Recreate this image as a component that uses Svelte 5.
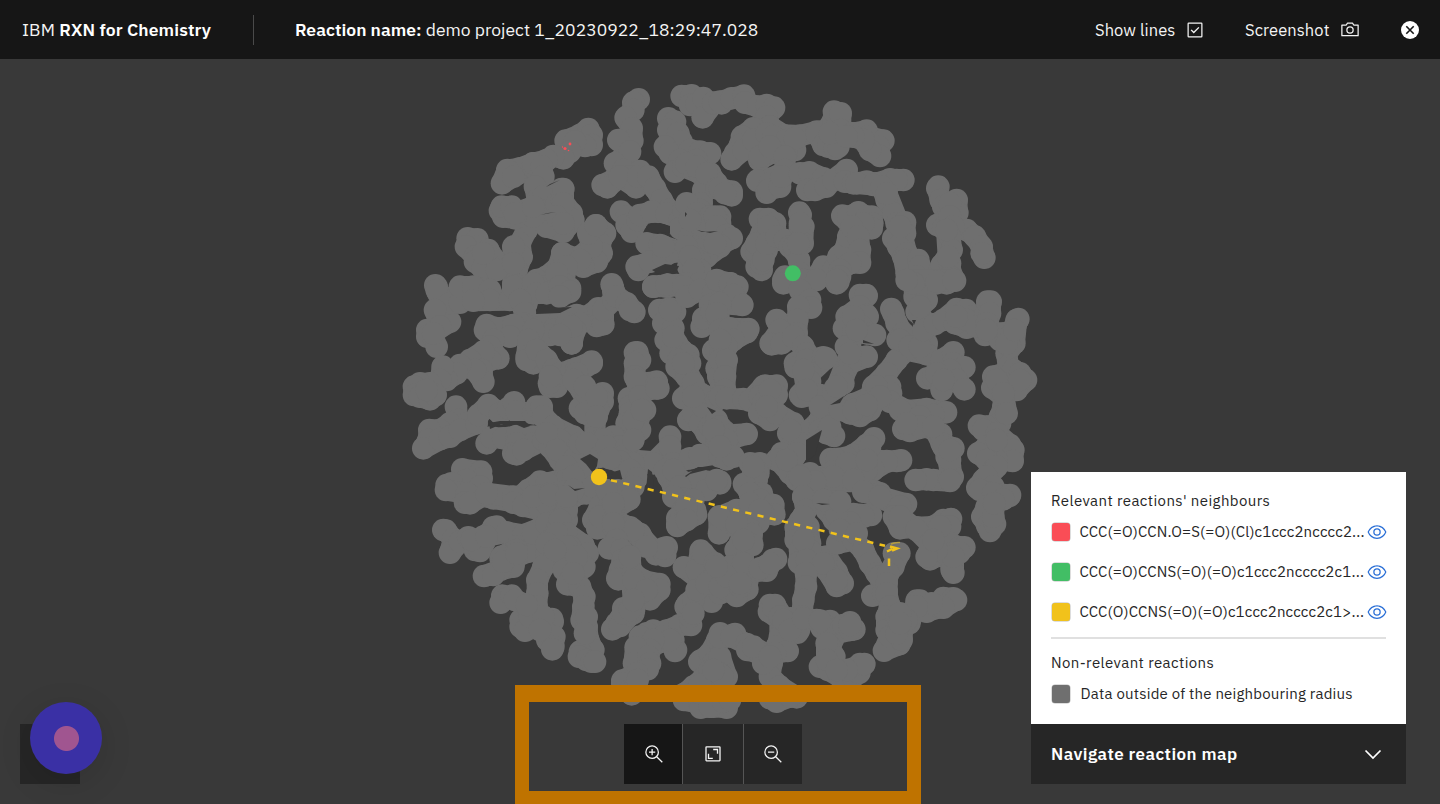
<script>
  // Clusters are kept per tile, in thirds of a pixel from the tile's corner.
  const tiles = [
    {
      x: 400, y: 70,
      strands: [
        '497,212 540,195 565,177 575,195 575,225 555,228 525,215 510,245 490,265 460,258 440,270 400,280 360,295 322,300 306,340 340,320 400,290',
        '400,280 425,290 430,320 405,350 412,390 395,430 380,480 360,520 365,560 350,600 340,640 345,660',
        '485,357 465,375 430,380 420,420 470,400 485,390 515,430 520,450 490,485 440,470 400,440 345,445 310,440 300,422 305,410 335,410 345,430 400,410',
        '490,357 490,400 470,440 490,460',
        '203,505 232,508 235,530 265,540 285,570 310,590 330,590',
        '198,530 225,560 225,575 248,595 290,600 250,550',
        '340,530 340,580',
        '588,466 615,490 600,520 605,550 590,575 550,590 540,560 575,530 565,490 588,466',
        '487,550 475,590 440,620 410,630 405,650',
        '487,550 540,570 500,590 490,640 510,655 440,650 470,610',
        '635,643 640,660',
        '716,88 700,98 700,120 677,143 695,175 697,212 655,210 690,245 645,280 670,300 720,303 690,320 640,330 608,345 622,352 660,320 708,352 715,320 745,320 765,355 785,390 805,420',
        '805,145 825,155 805,180 835,190 845,215 795,230 810,250 870,240 900,245 930,250 890,270 840,270 825,305 850,290 900,310 930,330 910,360 905,400 900,420',
        '930,310 950,340', '860,280 890,290 920,310',
        '845,78 875,76 870,105 890,100 910,84 908,142 940,100 965,100',
        '663,425 680,440 680,465 695,485 712,450 720,435 755,425 800,430 840,450 850,420 860,400 890,430 930,440 960,440',
        '840,475 870,500 910,510 960,510 960,460 900,465 870,450',
        '740,520 780,525 840,545 900,540 960,530 920,560 900,575 870,560',
        '715,600 710,590 750,575 790,560 820,545 790,530',
        '860,530 880,560 865,590 900,600',
        '870,560 880,600 860,640 830,645 760,650 800,650 900,640 920,660'
      ]
    },
    {
      x: 720, y: 70,
      strands: [
        '-20,98 0,95 35,85 72,77 75,98 115,110 140,105 162,113 140,140 150,170 190,195 240,197 290,185 320,180 340,150 342,125 362,130 362,180 400,190 440,182 445,200 490,212 475,230 480,258 450,240 430,210 400,200',
        '290,190 310,225 325,230 345,237 355,230 330,190 380,200',
        '150,170 100,175 66,200 60,225 45,250 35,268 70,240 100,210 140,190',
        '160,200 200,210 225,240 200,245 150,250 118,270 120,260 150,230 225,205',
        '195,260 195,300 170,320 112,332 150,340 140,368 145,360 180,350 185,320',
        '240,310 268,307 310,325 262,360 285,360 318,350 340,330 380,300 375,335 400,340 440,335 470,340 510,328 550,330 530,330',
        '410,340 460,345 485,350 500,390 520,430 530,460 555,457 555,490 520,505 535,530 550,560 560,610 590,640 600,655',
        '500,370 540,470 560,550',
        '555,570 595,570 600,590 590,620 680,640 705,632 690,600 660,600',
        '655,350 652,355 662,390 670,410 710,390 712,428 680,445 652,465 670,475 700,470 740,480 765,500 785,530 793,563 785,550',
        '690,400 690,440',
        '700,470 690,500 695,540 665,585 690,580 690,620 650,640',
        '680,480 685,560',
        '-10,355 0,355 35,365 35,376 15,370',
        '-15,440 -10,470 20,495 35,505 0,525 -15,520',
        '120,447 145,447 165,460 170,510 150,490 125,490 95,545 110,550 110,590 125,600 125,580 140,540',
        '110,520 130,570', '145,470 140,520',
        '170,500 195,510 210,530 225,545',
        '238,428 242,435 240,470 250,470 248,520 222,530 237,570 240,610 235,640 195,620 190,630 250,640 290,620 310,590 340,600 355,560 375,540 385,500 395,470 367,437 385,440 415,427 440,440 455,440 457,460 455,475 430,460',
        '240,460 235,520',
        '395,470 415,500 420,540 420,578 390,580 360,600 350,640 360,620',
        '30,640 40,650 10,645',
        '425,677 440,677'
      ]
    },
    {
      x: 400, y: 280,
      strands: [
        '106,16 115,40 145,60 125,100 150,125 110,150 82,150 82,170 100,170 110,200',
        '110,20 110,30 150,70 180,68 180,20 220,20 270,30 270,60 220,62 330,60 340,20 360,60 380,70',
        '105,90 120,140 100,160',
        '400,10 410,40 440,40 480,20 510,35 480,50',
        '360,60 375,100 370,130 440,130 480,120 530,105 560,110 595,85 600,130 590,138 610,133 610,90 640,60 638,20 650,50 680,70 703,96 690,90',
        '360,130 400,160 460,150 540,130',
        '260,135 295,145 340,135 330,170 255,150 280,180 270,200 295,235 270,240 250,215 210,240 245,270 250,305 225,270 180,255 170,280 140,300 128,260 120,300 90,310 60,310 42,320 42,345 60,350 90,358 107,345 80,330',
        '515,190 525,150 500,130 450,165 400,150 385,180 380,230 400,250 380,240 410,210 440,240 460,270 450,320 470,320 447,310 480,280 515,270 530,265 575,245 575,250 530,280 530,310 560,360 608,340 608,365 595,390 540,385 560,400 585,420 585,470',
        '515,190 515,140 480,165', '450,290 520,300 560,340', '555,320 555,400 590,350 590,410',
        '168,380 175,420 200,430 150,430 120,450 88,450 85,480 70,505 120,478 150,470 180,450 230,430 235,405 265,375 300,400 325,385 342,367 350,395 400,400 410,380 425,380 430,410 460,440 520,470 560,500 600,510',
        '260,490 275,472 310,475 350,468 400,470 400,490 350,490 340,520 350,523 370,510 430,480 450,500 480,540 500,570 490,600 550,590 560,620',
        '460,440 480,480 530,500 560,560 540,600 590,640',
        '440,460 470,510 520,540 500,560 540,580 500,600', '540,490 600,480 620,510',
        '705,218 712,217 720,240 705,250 705,290 725,310 770,305 775,325 740,330 700,350 687,355 690,380 735,390 690,400 680,430 695,455 690,480 640,470 610,480 560,490 600,530 650,515 660,500 720,450',
        '710,300 720,350 700,420', '620,500 680,500 670,530', '725,390 700,480', '770,310 770,325',
        '778,90 810,85 825,95 790,130 820,145 797,180 830,190 850,215 865,225 812,220 835,240 870,250 830,260 860,290 880,320 850,355 880,350 910,350 925,380 865,420 880,400 900,430 920,460 950,490',
        '810,90 820,170 850,250 880,310 910,380 930,440 960,470', '900,340 950,360',
        '880,350 940,440 960,480',
        '760,20 800,13 850,20 860,50 900,30 940,40 960,60 930,75',
        '905,140 910,115 935,95 955,110',
        '940,212 950,212',
        '950,265 955,290 965,320',
        '810,470 810,500 760,550 700,550 660,545 630,535 820,550 870,535 960,520 900,525',
        '690,570 710,595 680,630 650,650',
        '805,590 820,620 795,570 860,610 900,600 960,610',
        '820,570 840,620 920,630', '660,645 700,620',
        '187,568 243,575 245,595 200,600 140,615 155,610 240,620 200,640 280,655 340,665 385,630 420,605 430,640 500,660',
        '400,650 440,630 520,650', '440,610 520,590 500,640'
      ]
    },
    {
      x: 720, y: 280,
      strands: [
        '-10,0 30,10 52,20 40,45 67,75 0,70 -10,100 0,150 30,145 85,147 80,157 40,180 20,200 0,180 0,240 20,240 15,290 15,330 0,350 20,355 70,357 90,362 130,320 135,317 170,317 170,345 120,350 130,370 118,400 150,420 170,400 220,430 205,460 220,490 223,530 185,520 170,540 200,560',
        '190,10 250,0 290,0',
        '355,5 350,0',
        '240,30 270,60 273,83 235,80 232,120 230,160 170,120 180,150 152,190 155,193 185,190 220,170 250,200 260,220 225,250 227,262 260,240 310,232 318,235 270,280 270,305 240,345 245,350 300,345 310,380 300,420 270,450 240,490',
        '250,270 260,330', '210,450 230,520', '150,330 140,380',
        '300,420 300,450 330,460 342,468 320,460', '300,380 330,440',
        '420,45 438,45 420,80 380,110 440,105 443,110 372,145 425,140 440,160 465,165 400,155 390,195 378,200 400,230 440,230 390,250 370,290 345,325 370,310 340,335',
        '400,110 410,150', '390,220 350,320',
        '514,87 520,100 530,130 550,160 533,180 580,180 620,190 620,223 560,210 530,240 500,280 460,320 450,350 400,372 365,390 390,400 420,408 450,390 480,340 510,320 513,340 510,365 560,392 620,387 678,397 640,405 580,420 550,447 570,453 620,440 663,463 665,490 700,505 680,530 690,560 698,590 690,603 640,600 620,598 587,600',
        '540,180 570,200 600,200', '470,320 480,350 430,390', '360,390 400,390 440,375',
        '540,390 600,410 600,440 560,430 640,440 670,500 690,540', '690,510 690,600',
        '582,10 584,50 620,60 590,95 620,130 610,150 645,132 670,120 710,87 738,90 755,110 740,143 705,130 740,120 800,140 797,100 802,65 812,65 810,100 795,165 830,160 850,160 870,170 890,120 883,190 860,220 865,260',
        '710,110 770,140 800,130', '840,180 870,200', '590,40 600,80', '800,150 860,190',
        '895,117 883,150',
        '580,10 650,5 700,0 560,0',
        '820,290 880,270 900,280 918,300 890,330 850,310 817,323 850,350 850,380 840,410 840,430 800,440 777,437 790,450 830,460 870,495 880,510 878,543 830,540 800,500 775,520 800,540 820,570 790,600 772,623 820,640 870,645',
        '830,300 900,300', '850,340 860,400', '830,480 830,560', '800,590 820,620 800,640',
        '622,295 640,290 665,240 700,217 700,250 733,262 700,290 665,323 665,330 690,270 710,300 733,328',
        '650,280 670,300',
        '462,475 440,495 400,525 380,533 332,537 350,540 400,560 450,540 500,543 530,543 543,541 500,545 460,570 400,590 340,575 300,595 340,605 410,605 450,630 500,660',
        '380,550 440,570', '280,590 340,590', '450,500 440,540', '400,600 480,640',
        '175,540 210,580 230,600 270,580 250,610 285,605 250,650', '200,540 240,590',
        '-10,420 0,440 30,465 80,462 20,480 0,530 20,538 40,530', '-20,450 0,500',
        '0,605 -10,600',
        '90,550 120,550 115,580 110,600 72,612 90,640 125,640', '100,560 90,640'
      ]
    },
    {
      x: 400, y: 490,
      strands: [
        '138,0 200,10 195,38 210,40 260,10 340,20 340,38 370,48 420,60 440,40 500,20 560,10 580,-10',
        '400,20 450,10 520,0', '450,15 500,50 500,90',
        '130,120 138,122 160,148 150,188 180,155 205,142 225,180 240,183 280,112 290,110 250,140 320,127 370,135 420,115 470,90 500,60 500,20',
        '215,150 260,140', '302,205 350,170 385,185 350,200 340,230 300,240 252,258 280,255',
        '305,200 350,180 400,130', '310,215 350,190',
        '440,100 470,120 450,150 440,190 430,230 412,270 412,310 410,350 380,370 362,390 362,410 375,422 440,400 456,387 458,395 440,430 442,450 463,440 460,470 457,478',
        '390,380 430,380 420,420',
        '307,317 307,330 302,338 335,317 345,330 380,345',
        '480,90 500,130 550,165 563,190 510,170 495,200 492,240 540,220 553,230 505,275 502,283 540,290 553,320 550,350 545,390 560,410 565,450 580,480 540,485 537,500 560,510 575,515 585,515',
        '470,130 500,170 530,200 520,250', '560,380 555,430', '440,160 465,180',
        '580,90 600,50 630,40 650,0 680,10 688,28 640,60 592,115 640,110 660,100 690,112 720,132 725,142 760,180 768,193 800,172 795,195 795,198 790,175',
        '600,80 640,90', '620,0 640,40', '700,120 740,170',
        '640,100 650,150 627,175 665,180 668,210 660,240 652,265 655,268 700,250 730,272 778,282 778,300 750,328 720,310 700,345 670,355 700,370 662,385 650,400 637,418 660,408 690,375 702,360',
        '700,270 740,300', '670,370 690,360', '690,200 700,330',
        '760,422 740,430 720,450 800,422 840,405 873,405 870,380 857,350 862,342 900,305 935,335 900,270 852,232 890,240 902,182 910,190 950,230 930,270 960,310',
        '720,440 740,490', '790,440 770,460 820,450', '880,330 880,370', '890,300 920,280', '710,540 740,480',
        '828,480 825,483 810,450 760,450 750,480 707,472 702,520 745,500 750,520 743,538 710,550 667,572 667,580 690,600 695,613 700,600 713,570',
        '820,20 880,30 850,60 832,85 832,103 832,108 888,73 885,60 860,50 860,90',
        '957,80 957,130',
        '902,512 898,515 930,490 952,450 960,430 940,520 910,565 880,590 852,612 852,630 900,640 902,653 940,650 980,653',
        '930,540 960,590 900,610', '960,500 980,560',
        '900,585 960,550'
      ]
    },
    {
      x: 720, y: 490,
      strands: [
        '90,10 120,30 160,45 163,73 130,70 115,98 85,90 50,60 0,80 50,110 95,132 97,165 60,160 47,180 60,220 50,260 30,230 82,272 82,298 50,318 0,290 60,290 100,245 140,242 158,210 168,207 115,240',
        '90,40 120,60', '50,100 70,150 70,220', '20,260 60,280', '120,235 150,220',
        '-15,220 -10,230',
        '250,20 258,60 240,92 227,112 227,150 265,110 270,160 240,180 237,218 260,240 280,200 320,200 350,245 368,280 350,288 320,240 270,180',
        '250,80 250,150 260,210', '310,220 350,270',
        '258,250 258,290 250,330 245,380 212,385 200,400 232,428 237,420 200,400 165,345 150,345 147,365 180,390 180,440 170,470 203,483 165,490 155,520 150,560 180,590 230,622',
        '160,350 180,380', '190,390 210,420',
        '290,390 305,413 330,393 320,410 360,412 390,402 403,418 350,430 330,470 343,500 300,530 325,540 360,560 400,560 418,548 420,522 433,522 380,540',
        '250,385 300,392', '320,460 320,510 350,540', '370,405 390,420',
        '390,397 390,405',
        '320,60 342,90 400,72 453,75 430,80 390,98 370,130 352,160 400,150 430,180 450,220 470,250 500,300 475,312 457,317',
        '350,70 360,120 410,130', '480,260 490,310',
        '522,190 538,190 520,230 505,250 500,280',
        '310,30 360,35',
        '500,310 510,350 500,380 500,420 540,440 538,463 492,482 510,440 545,450 550,400 568,400 580,370 590,332 600,332 620,365 660,352 670,324 700,325 708,330 670,353 635,340',
        '530,380 530,430', '590,350 560,390',
        '540,370 540,400',
        '430,5 480,20 558,42 540,50 522,80 540,115 590,112 640,110 670,90 693,87 690,110 660,140 690,160 720,172 733,172 718,188 680,190 630,208 640,180 690,210 695,240 700,248 700,200',
        '540,80 590,120 630,160', '660,110 650,180', '620,200 640,150',
        '780,0 820,10 868,18 850,28 800,50 787,80 802,108 810,123 825,102 820,80 823,40',
        '45,432 0,442 35,440 80,462 82,480 120,490 130,520', '100,470 150,500',
        '0,552 8,560 -20,540',
        '-30,650 10,635 30,630',
        '150,625 170,635 210,620'
      ]
    }
  ];

  // Small openings left between touching clusters, in page pixels.
  const gaps = [
    '546,187 552,184 560,180 550,184', '540,215 556,212 548,213', '685,212 687,214 685,217',
    '697,230 702,232 718,231 710,233', '489,423 500,421 525,421 530,426 524,428 515,424 502,424 490,429',
    '646,226 660,223 670,226 670,233 650,232', '652,270 665,264 679,266 677,270 660,275',
    '538,304 550,308 572,307 560,313 536,314', '580,459 590,454 598,459 597,466 593,473 586,464',
    '568,485 574,489 585,488 575,491', '613,472 620,470 622,478 610,480',
    '648,469 652,472 654,486 650,490 646,490', '685,476 698,467 718,467 690,474 686,477',
    '707,407 716,411 712,414', '912,320 916,320 914,325', '863,340 874,344 863,343',
    '830,405 844,396 840,403', '806,440 822,430 815,455 806,462', '816,503 830,504 822,505'
  ];

  const dots = tiles.map((t) => ({
    ...t,
    nodes: t.strands.flatMap((s) => s.split(' ').map((p) => p.split(',')))
  }));

  const neighbours = [
    { color: '#fa4d56', text: 'CCC(=O)CCN.O=S(=O)(Cl)c1ccc2ncccc2...' },
    { color: '#42be65', text: 'CCC(=O)CCNS(=O)(=O)c1ccc2ncccc2c1...' },
    { color: '#f1c21b', text: 'CCC(O)CCNS(=O)(=O)c1ccc2ncccc2c1>...' }
  ];
</script>

<div class="app">
  <header>
    <div class="brand">IBM <b>RXN for Chemistry</b></div>
    <div class="title"><b>Reaction name:</b> <span>demo project 1_20230922_18:29:47.028</span></div>
    <div class="actions">
      <button class="lines"><span>Show lines</span>
        <svg width="20" height="20" viewBox="0 0 32 32" fill="#f4f4f4"><path d="M26 4H6a2 2 0 0 0-2 2v20a2 2 0 0 0 2 2h20a2 2 0 0 0 2-2V6a2 2 0 0 0-2-2zM6 26V6h20v20zM14 21.5l-5-4.96L10.6 15l3.4 3.35L21.4 11 23 12.58z" /></svg>
      </button>
      <button class="shot"><span>Screenshot</span>
        <svg width="20" height="20" viewBox="0 0 32 32" fill="#f4f4f4"><path d="M29 26H3a1 1 0 0 1-1-1V8a1 1 0 0 1 1-1h6.46l1.71-2.55A1 1 0 0 1 12 4h8a1 1 0 0 1 .83.45L22.54 7H29a1 1 0 0 1 1 1v17a1 1 0 0 1-1 1zM4 24h24V9h-6a1 1 0 0 1-.83-.45L19.46 6h-6.92l-1.71 2.55A1 1 0 0 1 10 9H4z" /><path d="M16 22a6 6 0 1 1 6-6 6 6 0 0 1-6 6zm0-10a4 4 0 1 0 4 4 4 4 0 0 0-4-4z" /></svg>
      </button>
      <button class="close" aria-label="Close">
        <svg width="20" height="20" viewBox="0 0 20 20"><circle cx="10" cy="10" r="9" fill="#fff" /><path d="M6.3 6.3l7.4 7.4M13.7 6.3l-7.4 7.4" stroke="#161616" stroke-width="1.6" /></svg>
      </button>
    </div>
  </header>

  <main>
    <svg class="map" width="1440" height="745" viewBox="0 59 1440 745">
      {#each dots as t}
        <g transform="translate({t.x} {t.y}) scale(0.33333)" fill="#6f6f6f">
          {#each t.strands as s}
            <polyline points={s} fill="none" stroke="#6f6f6f" stroke-width="64" stroke-linejoin="round" stroke-linecap="round" />
          {/each}
          {#each t.nodes as n}
            <circle cx={n[0]} cy={n[1]} r="34" />
          {/each}
        </g>
      {/each}
      {#each gaps as g}
        <polygon points={g} fill="#393939" />
      {/each}
      <g fill="#fa4d56">
        <circle cx="565" cy="148.500" r="1.600" /><circle cx="570" cy="144" r="1.400" /><circle cx="568.500" cy="150.500" r=".8" /><circle cx="562.500" cy="147" r=".7" />
      </g>
      <circle cx="792.800" cy="273.300" r="8" fill="#42be65" />
      <g stroke="#f1c21b" stroke-width="2.500" fill="none">
        <path d="M611 480.200L885 545.800" stroke-dasharray="6.200 6.350" />
        <path d="M887 551.500l5-2.500M890 546.500l7 2-5 2M889 558.500v7.500" />
        <path d="M891 544q4-2 9-1.500" stroke-width="1.500" opacity=".55" />
      </g>
      <circle cx="599" cy="477" r="8.200" fill="#f1c21b" />
    </svg>

    <div class="highlight"></div>

    <div class="zoom">
      <button class="active" aria-label="Zoom in">
        <svg width="20" height="20" viewBox="0 0 32 32" fill="#f4f4f4"><path d="M18 12h-4V8h-2v4H8v2h4v4h2v-4h4z" /><path d="M21.45 20A10.700 10.700 0 0 0 24 13a11 11 0 1 0-11 11 10.700 10.700 0 0 0 7-2.550L28.590 30 30 28.590zM13 22a9 9 0 1 1 9-9 9 9 0 0 1-9 9z" /></svg>
      </button>
      <button aria-label="Fit to screen">
        <svg width="20" height="20" viewBox="0 0 20 20" fill="none" stroke="#f4f4f4" stroke-width="1.300"><rect x="3" y="2.800" width="14" height="14" rx=".5" /><path d="M10.200 5.500h4.300v4.300M5.500 9.800v4.500h4.300" /></svg>
      </button>
      <button aria-label="Zoom out">
        <svg width="20" height="20" viewBox="0 0 32 32" fill="#f4f4f4"><path d="M8 12h10v2H8z" /><path d="M21.450 20A10.700 10.700 0 0 0 24 13a11 11 0 1 0-11 11 10.700 10.700 0 0 0 7-2.550L28.590 30 30 28.590zM13 22a9 9 0 1 1 9-9 9 9 0 0 1-9 9z" /></svg>
      </button>
    </div>

    <div class="corner"></div>
    <div class="record"></div>

    <section class="legend">
      <div class="panel">
        <h2 class="rel">Relevant reactions' neighbours</h2>
        {#each neighbours as n}
          <div class="row">
            <i style="background:{n.color}"></i>
            <span>{n.text}</span>
            <svg width="20" height="20" viewBox="0 0 32 32" fill="#2a6fd6"><path d="M30.940 15.660A16.690 16.690 0 0 0 16 5 16.690 16.690 0 0 0 1.060 15.660a1 1 0 0 0 0 .68A16.690 16.690 0 0 0 16 27a16.690 16.690 0 0 0 14.940-10.660 1 1 0 0 0 0-.68zM16 25c-5.300 0-10.900-3.930-12.930-9C5.100 10.930 10.700 7 16 7s10.900 3.930 12.930 9C26.900 21.070 21.300 25 16 25z" /><path d="M16 10a6 6 0 1 0 6 6 6 6 0 0 0-6-6zm0 10a4 4 0 1 1 4-4 4 4 0 0 1-4 4z" /></svg>
          </div>
        {/each}
        <hr />
        <h2 class="non">Non-relevant reactions</h2>
        <div class="row other"><i></i><span>Data outside of the neighbouring radius</span></div>
      </div>
      <button class="nav"><span>Navigate reaction map</span>
        <svg width="20" height="20" viewBox="0 0 20 20"><path d="M2.500 6.500L10 14l7.500-7.500" fill="none" stroke="#fff" stroke-width="1.700" /></svg>
      </button>
    </section>
  </main>
</div>

<style>
  :global(body) { background: #393939; overflow: hidden; }
  .app {
    display: flex; flex-direction: column; width: 1440px; height: 804px; overflow: hidden;
    background: #393939; color: #f4f4f4; font-family: "IBM Plex Sans", Roboto, sans-serif; font-size: 16px;
  }
  button { background: none; border: 0; padding: 0; margin: 0; color: inherit; font: inherit; display: flex; align-items: center; }
  svg { display: block; flex: none; }
  b { font-weight: 600; color: #fff; }
  header { height: 59px; flex: none; box-sizing: border-box; background: #161616; display: flex; align-items: center; white-space: nowrap; padding: 1px 20px 0 22px; }
  .brand { width: 231px; height: 30px; line-height: 30px; border-right: 1px solid #4a4a4a; font-size: 17.500px; letter-spacing: .12px; }
  .title { margin-left: 41px; margin-top: -2px; font-size: 17.500px; letter-spacing: .01px; }
  .actions { margin-left: auto; display: flex; align-items: center; }
  .actions span { font-size: 16.500px; letter-spacing: .07px; }
  .lines { width: 110px; justify-content: space-between; margin-right: 40px; }
  .shot { width: 115px; justify-content: space-between; margin-right: 40px; }
  main { position: relative; flex: 1; overflow: hidden; }
  .highlight { position: absolute; left: 515px; top: 626px; width: 406px; height: 119px; box-sizing: border-box; border: solid #bf7300; border-width: 17px 14px 13px; }
  .zoom { position: absolute; left: 624px; top: 665px; display: flex; width: 178px; height: 60px; background: #262626; }
  .zoom button { width: 58px; justify-content: center; box-sizing: border-box; }
  .zoom button + button { border-left: 1px solid #555; width: 61px; }
  .zoom button:last-child { width: 59px; padding-right: 1px; }
  .zoom .active { background: #161616; padding-left: 1px; }
  .corner { position: absolute; left: 20px; top: 665px; width: 60px; height: 60px; background: #262626; }
  .record { position: absolute; left: 30px; top: 643px; width: 72px; height: 72px; border-radius: 50%; background: radial-gradient(circle at 36.500px 36.500px, #a05590 12px, #3a30a5 13px); box-shadow: 0 8px 34px rgba(0, 0, 0, .12); }
  .legend { position: absolute; left: 1031px; top: 413px; width: 375px; }
  .panel { height: 252px; box-sizing: border-box; background: #fff; color: #262626; padding: 19px 20px 0; white-space: nowrap; }
  h2 { margin: 0; font-size: 15px; font-weight: 400; line-height: 20px; letter-spacing: .4px; }
  .row { height: 40px; display: flex; align-items: center; }
  .rel + .row { margin-top: 1px; }
  .row i { width: 18px; height: 18px; border-radius: 3px; margin: 0 10px 0 .5px; flex: none; box-shadow: 0 0 0 .5px #bbb; }
  .row span { font-size: 15px; flex: 1; letter-spacing: .17px; padding-bottom: 2px; }
  .row svg { margin-right: -1px; }
  hr { border: 0; height: 2px; background: #e0e0e0; margin: 5px 0 14px; }
  .other { height: 42px; }
  .other i { background: #6f6f6f; margin-right: 11px; }
  .row.other span { letter-spacing: .2px; }
  .nav { width: 375px; height: 60px; background: #262626; padding: 0 23px 0 20px; justify-content: space-between; font-size: 17px; font-weight: 600; letter-spacing: .44px; color: #fff; }
</style>
